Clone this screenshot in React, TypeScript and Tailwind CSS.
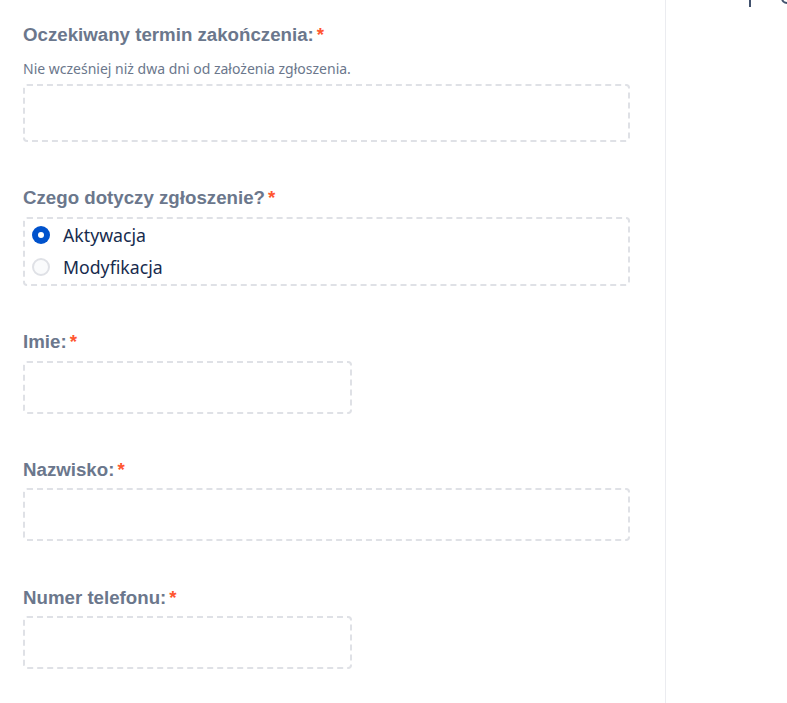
import React from "react";

const Label = ({ text, className = "" }: { text: string; className?: string }) => (
  <div className={`h-5 flex items-center text-[18.7px] font-bold text-[#6b778c] leading-5 ${className}`} style={{ fontFamily: '"Liberation Sans", Arial, sans-serif' }}>
    <span>{text}</span>
    <span className="ml-[3px] text-[#ff5630]">*</span>
  </div>
);

const Box = ({ w, h }: { w: string; h: string }) => (
  <div className={`${w} ${h} border-2 border-dashed border-[#dfe1e6] rounded-[4px]`} />
);

export default function App() {
  return (
    <div className="relative w-[787px] h-[703px] bg-white overflow-hidden flex" style={{ fontFamily: '"Noto Sans", "Open Sans", sans-serif' }}>
      <div className="w-[666px] border-r border-[#ebecf0] pl-[23px] pr-[36px] pt-[25px] flex flex-col">
        <Label text="Oczekiwany termin zakończenia:" />
        <div className="mt-[15px] h-4 flex items-center text-[14px] text-[#6b778c]">Nie wcześniej niż dwa dni od założenia zgłoszenia.</div>
        <div className="mt-[8px]"><Box w="w-[607px]" h="h-[58px]" /></div>

        <Label text="Czego dotyczy zgłoszenie?" className="mt-[46px]" />
        <div className="mt-[9px] w-[607px] h-[69px] border-2 border-dashed border-[#dfe1e6] rounded-[4px] flex flex-col">
          <div className="h-8 flex items-center pl-[7px]">
            <span className="w-[18px] h-[18px] rounded-full bg-[#0052cc] flex items-center justify-center">
              <span className="w-[6px] h-[6px] rounded-full bg-white" />
            </span>
            <span className="ml-[13px] text-[17.7px] text-[#172b4d]">Aktywacja</span>
          </div>
          <div className="h-8 flex items-center pl-[7px]">
            <span className="w-[18px] h-[18px] rounded-full bg-[#fafbfc] border-2 border-[#dfe1e6]" />
            <span className="ml-[13px] text-[17.7px] text-[#172b4d]">Modyfikacja</span>
          </div>
        </div>

        <Label text="Imie:" className="mt-[46px]" />
        <div className="mt-[9px]"><Box w="w-[329px]" h="h-[53px]" /></div>

        <Label text="Nazwisko:" className="mt-[46px]" />
        <div className="mt-[8px]"><Box w="w-[607px]" h="h-[53px]" /></div>

        <Label text="Numer telefonu:" className="mt-[47px]" />
        <div className="mt-[8px]"><Box w="w-[329px]" h="h-[53px]" /></div>
      </div>
      <div className="absolute left-[749px] top-0 w-[2px] h-[7px] bg-[#42526e]" />
      <div className="absolute left-[781px] top-[-8px] w-[12px] h-[12px] rounded-full border-2 border-[#42526e]" />
    </div>
  );
}
